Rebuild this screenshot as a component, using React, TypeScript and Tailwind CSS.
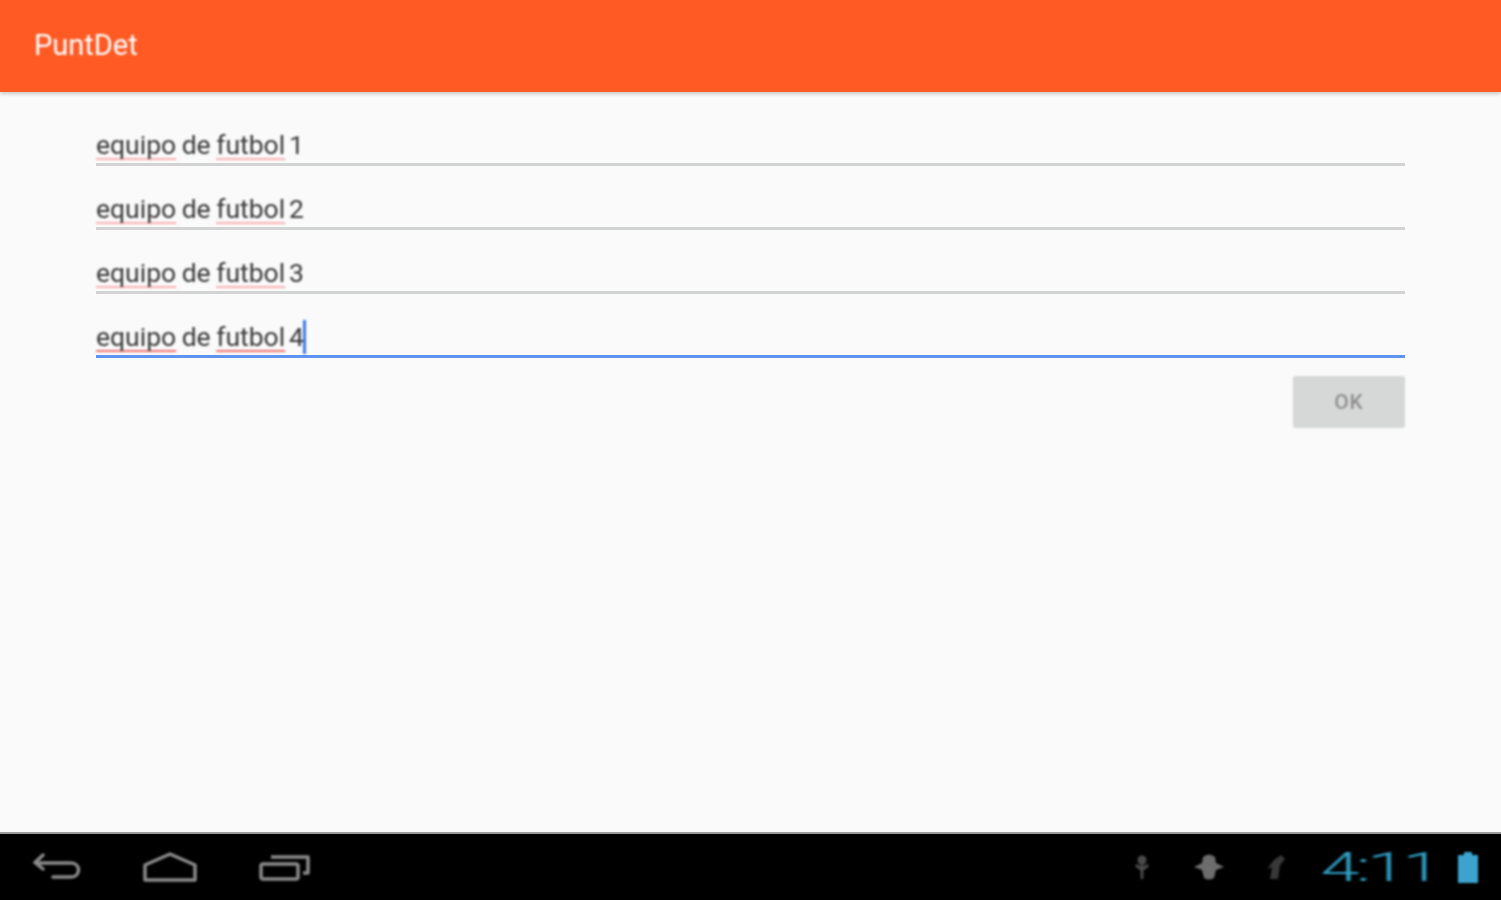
const teams = ["1", "2", "3", "4"];

function Misspelled({ children, active }: { children: string; active: boolean }) {
  return (
    <span className={active ? "underline decoration-[#f07070] decoration-2 underline-offset-[4px] [text-decoration-skip-ink:none]" : "underline decoration-[#f8b0b0] decoration-2 underline-offset-[4px] [text-decoration-skip-ink:none]"}>
      {children}
    </span>
  );
}

function TeamField({ number, focused }: { number: string; focused: boolean }) {
  return (
    <div className={focused ? "flex h-[64px] items-end border-b-[3px] border-[#5f93f2] pb-[4px]" : "flex h-[64px] items-end border-b-[3px] border-[#d2d3d3] pb-[4px]"}>
      <div className="relative flex items-center text-[26.5px] leading-[28px] text-[#383838] blur-[0.8px] [font-family:Roboto,sans-serif]">
        <Misspelled active={focused}>equipo</Misspelled>
        <span className="w-[40px] text-center">de</span>
        <Misspelled active={focused}>futbol</Misspelled>
        <span className="ml-[4px]">{number}</span>
        {focused && <span className="absolute top-[-3px] right-[-2px] h-[34px] w-[3px] bg-[#3f78e0]" />}
      </div>
    </div>
  );
}

function NavIcons() {
  return (
    <div className="flex items-center gap-[62px] pl-[33px] blur-[0.8px]">
      <svg width="48" height="30" viewBox="0 0 48 30" fill="none" stroke="#8a8a8a" strokeWidth="3.5" strokeLinecap="round" strokeLinejoin="round">
        <path d="M10 3 L2 10.5 L10 17" />
        <path d="M3 11 H38 C48 11 48 25 38 25 H20" />
      </svg>
      <svg width="54" height="30" viewBox="0 0 54 30" fill="none" stroke="#8a8a8a" strokeWidth="3.5" strokeLinejoin="round">
        <path d="M2 28 V13 L27 2 L52 13 V28 Z" />
      </svg>
      <svg width="52" height="28" viewBox="0 0 52 28" fill="none" stroke="#8a8a8a" strokeWidth="3.5" strokeLinejoin="round">
        <rect x="2" y="11" width="37" height="15" rx="2" />
        <path d="M12 4 H49 V20 H44" />
      </svg>
    </div>
  );
}

function StatusTray() {
  return (
    <div className="flex items-center pr-[22px]">
      <div className="flex items-center blur-[1.2px]">
        <svg width="20" height="28" viewBox="0 0 20 28" className="mr-[41px]">
          <circle cx="10" cy="7" r="4.5" fill="#4a4a4a" />
          <path d="M10 8 V26 M4 12 L10 17 L16 12" stroke="#4a4a4a" strokeWidth="3" fill="none" />
        </svg>
        <svg width="32" height="28" viewBox="0 0 32 28" className="mr-[41px]">
          <path d="M10 4 Q16 -1 22 4 L23 10 L31 14 L23 17 L21 25 Q16 28 11 25 L9 17 L1 14 L9 10 Z" fill="#6d6d6d" />
        </svg>
        <svg width="20" height="28" viewBox="0 0 20 28" className="mr-[83px]">
          <path d="M15 2 L19 6 L14 12 L12 26 L4 26 L6 14 L1 16 L8 7 Z" fill="#383838" />
        </svg>
      </div>
      <span className="mr-[19px] origin-right scale-x-[1.7] text-[41px] leading-none font-light tracking-[-2px] text-[#33a5cc] blur-[0.8px] [font-family:Roboto,sans-serif]">
        4:11
      </span>
      <svg width="22" height="31" viewBox="0 0 22 31" className="blur-[0.8px]">
        <path d="M7 0 H15 V3 H21 V31 H1 V3 H7 Z" fill="#3ca3cf" />
      </svg>
    </div>
  );
}

export default function App() {
  return (
    <div className="flex h-[900px] w-full flex-col overflow-hidden bg-[#fafafa]">
      <header className="flex h-[92px] shrink-0 items-center bg-[#ff5a24] pl-[34px] shadow-[0_2px_4px_rgba(0,0,0,0.2)]">
        <h1 className="text-[29px] font-normal text-white blur-[0.8px] [font-family:Roboto,sans-serif]">PuntDet</h1>
      </header>

      <main className="flex flex-1 flex-col px-[96px] pt-[10px]">
        {teams.map((n) => (
          <TeamField key={n} number={n} focused={n === "4"} />
        ))}
        <div className="mt-[18px] flex justify-end">
          <button className="h-[52px] w-[112px] rounded-[2px] bg-[#d6d7d7] pt-[2px] text-[21px] font-medium tracking-[1px] text-[#8f8f8f] blur-[0.8px] [font-family:Roboto,sans-serif]">
            OK
          </button>
        </div>
      </main>

      <footer className="flex h-[68px] shrink-0 items-center justify-between border-t-[2px] border-[#9a9a9a] bg-black">
        <NavIcons />
        <StatusTray />
      </footer>
    </div>
  );
}
